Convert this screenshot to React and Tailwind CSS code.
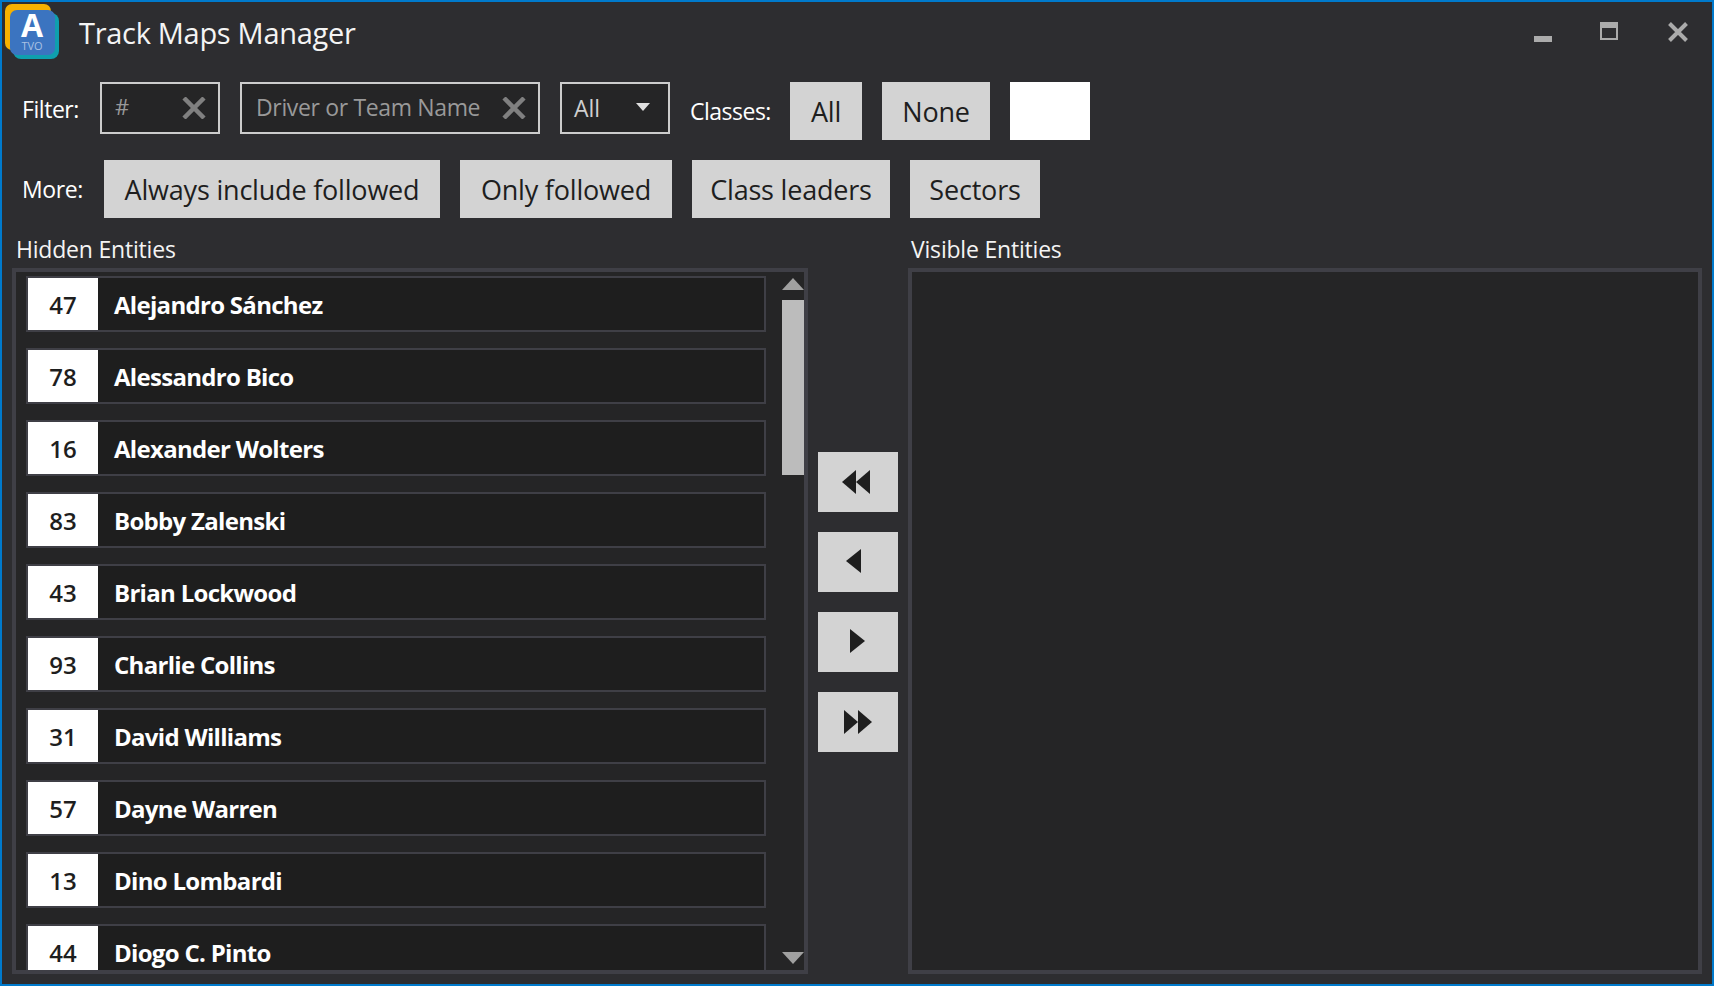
const font = { fontFamily: '"Open Sans", "Noto Sans", sans-serif' };

const drivers = [
  ['47', 'Alejandro Sánchez'],
  ['78', 'Alessandro Bico'],
  ['16', 'Alexander Wolters'],
  ['83', 'Bobby Zalenski'],
  ['43', 'Brian Lockwood'],
  ['93', 'Charlie Collins'],
  ['31', 'David Williams'],
  ['57', 'Dayne Warren'],
  ['13', 'Dino Lombardi'],
  ['44', 'Diogo C. Pinto'],
];

function Logo() {
  return (
    <svg width="58" height="58" viewBox="0 0 58 58" className="block">
      <rect x="3" y="2" width="46" height="46" rx="7" fill="#f6b100" />
      <rect x="11" y="11" width="46" height="46" rx="8" fill="#0f9fae" />
      <rect x="8" y="8" width="45" height="45" rx="7" fill="#3b74c0" />
      <text x="30" y="35" textAnchor="middle" fill="#ffffff" fontFamily="Open Sans" fontWeight="700" fontSize="32">A</text>
      <text x="30" y="48" textAnchor="middle" fill="#a9c1e3" fontFamily="Open Sans" fontWeight="400" fontSize="11">TVO</text>
    </svg>
  );
}

function XIcon() {
  return (
    <svg width="24" height="22" viewBox="0 0 24 22" className="block">
      <path d="M2 1 L22 21 M22 1 L2 21" stroke="#808080" strokeWidth="4.5" />
    </svg>
  );
}

function GrayBtn({ w, children }) {
  return (
    <button className="h-[58px] pt-[2px] flex items-center justify-center bg-[#d3d3d3] text-[#1e1e1e] text-[27px] tracking-[-0.2px] whitespace-nowrap shrink-0" style={{ width: w }}>
      {children}
    </button>
  );
}

function ArrowBtn({ points }) {
  return (
    <button className="w-20 h-[60px] bg-[#d3d3d3] block">
      <svg width="80" height="60" viewBox="0 0 80 60" className="block">
        {points.map((p) => (
          <polygon key={p} points={p} fill="#1e1e1e" />
        ))}
      </svg>
    </button>
  );
}

export default function App() {
  return (
    <div className="w-[1714px] h-[986px] border-2 border-[#007acc] bg-[#2d2d30] flex flex-col overflow-hidden text-white" style={font}>
      {/* Title bar */}
      <div className="h-20 flex items-start relative shrink-0">
        <Logo />
        <div className="ml-[19px] mt-[9px] text-[29px] leading-[44px] tracking-[-0.3px] text-[#f4f4f4] whitespace-nowrap">Track Maps Manager</div>
        <div className="ml-auto flex items-start">
          <svg width="18" height="6" className="mt-[34px] block"><rect width="18" height="6" fill="#ababab" /></svg>
          <svg width="18" height="18" viewBox="0 0 18 18" className="mt-5 ml-12 block">
            <rect x="1" y="1" width="16" height="16" fill="none" stroke="#ababab" strokeWidth="2" />
            <rect width="18" height="6" fill="#ababab" />
          </svg>
          <svg width="20" height="20" viewBox="0 0 20 20" className="mt-5 ml-[50px] mr-6 block">
            <path d="M1.5 1.5 L18.5 18.5 M18.5 1.5 L1.5 18.5" stroke="#ababab" strokeWidth="4" />
          </svg>
        </div>
      </div>

      {/* Filter row */}
      <div className="h-[58px] flex items-start pl-5 shrink-0">
        <div className="w-[78px] mt-[10px] text-[23px] leading-[34px] tracking-[-0.45px] shrink-0">Filter:</div>
        <div className="w-[120px] h-[52px] border-2 border-[#cccccc] bg-[#252526] flex items-center pl-[13px] pr-3 justify-between shrink-0">
          <span className="text-[#999999] text-[22px] -mt-[3px]">#</span>
          <XIcon />
        </div>
        <div className="w-[300px] h-[52px] ml-5 border-2 border-[#cccccc] bg-[#252526] flex items-center pl-[14px] pr-3 justify-between shrink-0">
          <span className="text-[#999999] text-[23px] tracking-[-0.35px] -mt-[2px] whitespace-nowrap">Driver or Team Name</span>
          <XIcon />
        </div>
        <div className="w-[110px] h-[52px] ml-5 border-2 border-[#cccccc] bg-[#252526] flex items-center pl-3 pr-[18px] justify-between shrink-0">
          <span className="text-[#cfcfcf] text-[23px]">All</span>
          <svg width="14" height="8" className="block -mt-[2px]"><polygon points="0,0 14,0 7,8" fill="#e0e0e0" /></svg>
        </div>
        <div className="w-[100px] ml-5 mt-3 text-[23px] leading-[34px] tracking-[-0.5px] whitespace-nowrap shrink-0">Classes:</div>
        <GrayBtn w={72}>All</GrayBtn>
        <div className="ml-5"><GrayBtn w={108}>None</GrayBtn></div>
        <div className="w-20 h-[58px] ml-5 bg-white shrink-0" />
      </div>

      {/* More row */}
      <div className="h-[58px] mt-5 flex items-start pl-5 shrink-0">
        <div className="w-[82px] mt-[13px] text-[23px] leading-[32px] tracking-[-0.4px] shrink-0">More:</div>
        <div className="flex gap-5">
          <GrayBtn w={336}>Always include followed</GrayBtn>
          <GrayBtn w={212}>Only followed</GrayBtn>
          <GrayBtn w={198}>Class leaders</GrayBtn>
          <GrayBtn w={130}>Sectors</GrayBtn>
        </div>
      </div>

      {/* Headers */}
      <div className="h-[50px] flex items-center shrink-0 text-[23px] tracking-[-0.2px] text-[#f4f4f4]">
        <div className="ml-[14px] w-[895px] mt-[12px]">Hidden Entities</div>
        <div className="mt-[12px]">Visible Entities</div>
      </div>

      {/* Panels */}
      <div className="flex items-start pl-[10px] h-[706px] shrink-0">
        <div className="w-[796px] h-[706px] border-4 border-[#3f3f46] bg-[#252526] flex overflow-hidden shrink-0">
          <div className="w-[766px] h-[698px] overflow-hidden pl-[10px] pt-1 flex flex-col gap-4 shrink-0">
            {drivers.map(([num, name]) => (
              <div key={num} className="w-[740px] h-14 shrink-0 border-2 border-[#3f3f46] bg-[#1e1e1e] flex items-center">
                <div className="w-[70px] h-[52px] pt-[2px] bg-white text-[#1e1e1e] text-[24px] font-semibold flex items-center justify-center shrink-0">{num}</div>
                <div className="ml-4 pt-[2px] text-[24px] font-bold tracking-[-0.7px] text-white whitespace-nowrap">{name}</div>
              </div>
            ))}
          </div>
          <div className="w-[22px] h-[698px] relative shrink-0">
            <svg width="22" height="12" className="absolute left-0 top-[6px]"><polygon points="0,12 11,0 22,12" fill="#a0a0a0" /></svg>
            <div className="absolute left-0 top-7 w-[22px] h-[175px] bg-[#bcbcbc]" />
            <svg width="22" height="12" className="absolute left-0 top-[680px]"><polygon points="0,0 22,0 11,12" fill="#a0a0a0" /></svg>
          </div>
        </div>

        <div className="w-20 ml-[10px] pt-[184px] flex flex-col gap-5 shrink-0">
          <ArrowBtn points={['24,30 38,18 38,42', '38,30 52,18 52,42']} />
          <ArrowBtn points={['28,29 43,17 43,41']} />
          <ArrowBtn points={['32,17 47,29 32,41']} />
          <ArrowBtn points={['26,18 40,30 26,42', '40,18 54,30 40,42']} />
        </div>

        <div className="w-[794px] h-[706px] ml-[10px] border-4 border-[#3f3f46] bg-[#252526] shrink-0" />
      </div>
    </div>
  );
}
